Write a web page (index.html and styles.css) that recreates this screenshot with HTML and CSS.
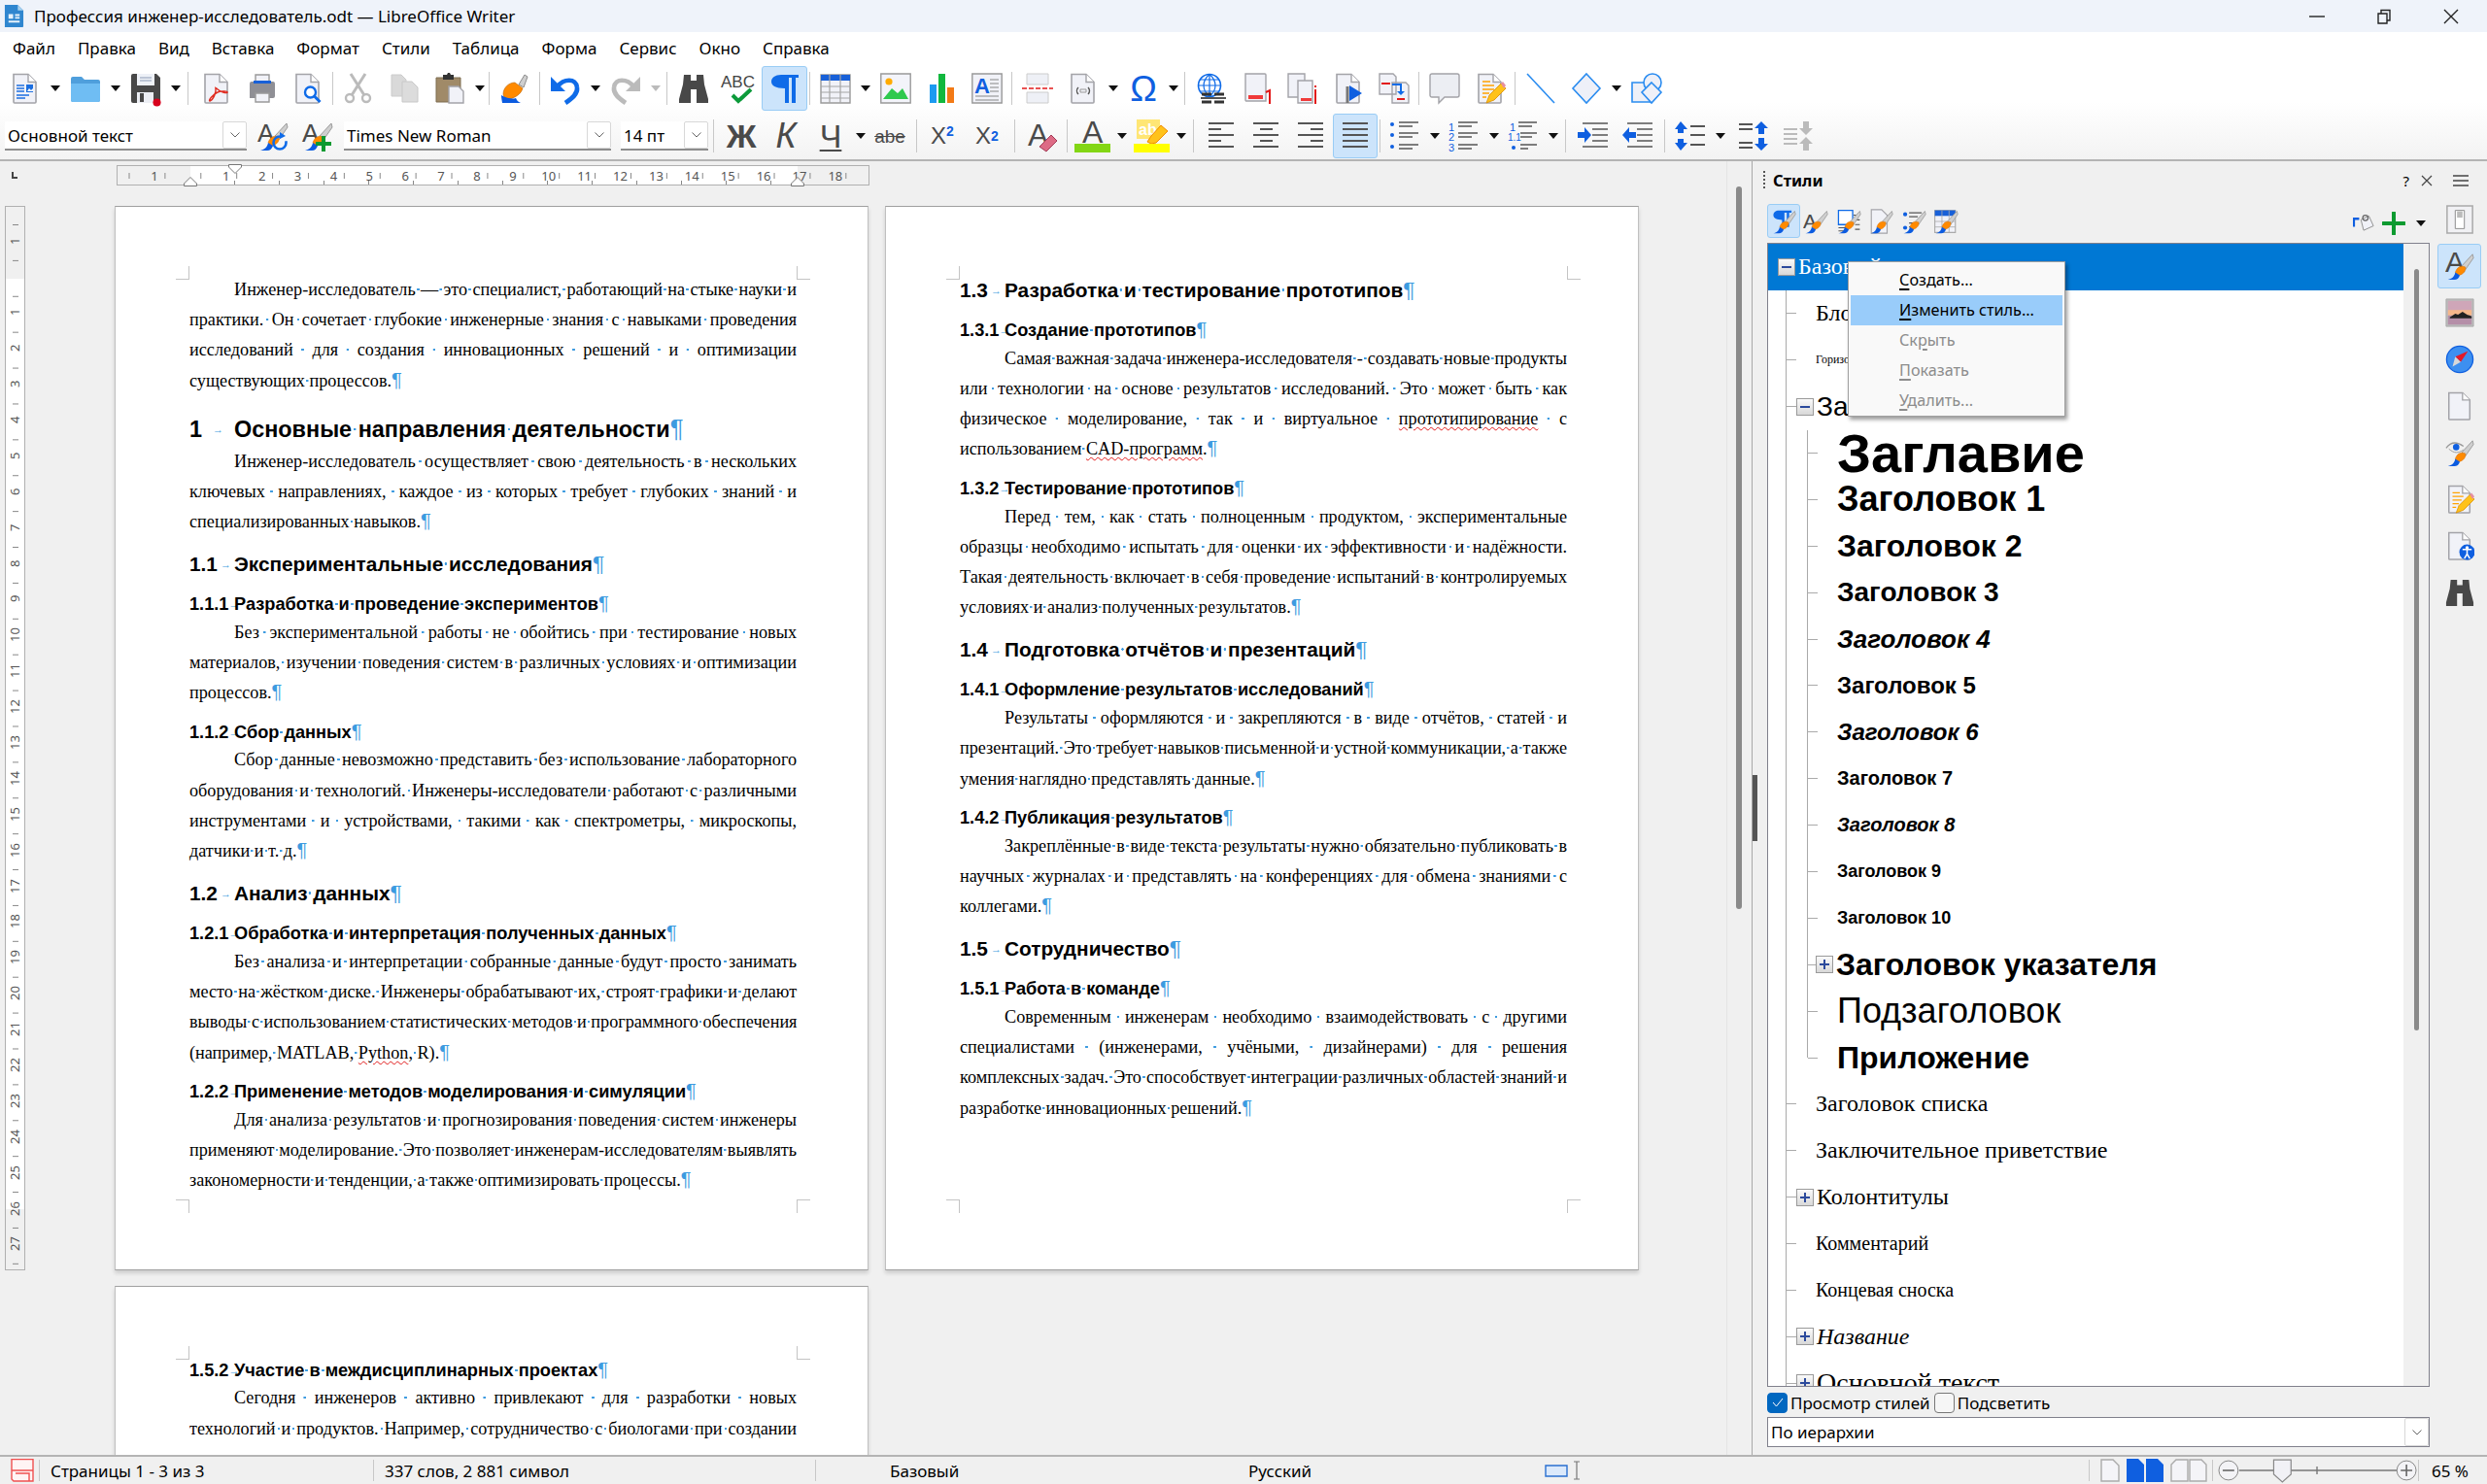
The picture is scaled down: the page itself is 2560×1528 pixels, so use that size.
FILE: index.html
```html
<!DOCTYPE html>
<html lang="ru">
<head>
  <meta charset="UTF-8" />
  <meta name="viewport" content="width=device-width, initial-scale=1.0"/>
  <title>Профессия инженер-исследователь.odt — LibreOffice Writer</title>
  <link rel="stylesheet" href="styles.css">
</head>
<body>
<svg class="defs" xmlns="http://www.w3.org/2000/svg">
  <symbol id="page" viewBox="0 0 32 32">
    <path d="M4 1.5h15l8 8V30a1 1 0 0 1-1 1H5a1 1 0 0 1-1-1z" fill="#f1f2f8" stroke="#a3a3a8" stroke-width="1.6"/>
    <path d="M19 1.5v8h8" fill="#fff" stroke="#a3a3a8" stroke-width="1.4"/>
  </symbol>
  <symbol id="brush" viewBox="0 0 32 32">
    <path d="M30 3 18 16l4 4 9-13z" fill="#cfcfcf" stroke="#9a9a9a"/>
    <path d="M11 23c2-6 6-8 11-6 1 4-2 8-7 9z" fill="#ff8a00" stroke="#d96f00" stroke-width=".6"/>
    <path d="M3 31c4-1 7-3 8-8l5 3c-1 3-3 5-6 5z" fill="#0b5be0"/>
  </symbol>
  <symbol id="binoc" viewBox="0 0 32 32">
    <path d="M6 2h7v6h6V2h7l1 10 4 15v4H19V17h-6v14H1v-4l4-15z" fill="#484848"/>
  </symbol>
</svg>

<div class="app">
  <div class="titlebar">
    <svg class="app-icon" viewBox="0 0 22 26"><path d="M1 1h14l6 6v17a1 1 0 0 1-1 1H1z" fill="#2f86cf"/><path d="M15 1v6h6z" fill="#a9d2ee"/><path d="M5 11h5v5H5zM12 11h5v2h-5zM12 14h5v2h-5zM5 18h12v2H5z" fill="#e6f2fb"/></svg>
    <span class="title">Профессия инженер-исследователь.odt — LibreOffice Writer</span>
    <div class="winctl">
      <svg viewBox="0 0 16 16"><path d="M0 8h16" stroke="#222" stroke-width="1.4"/></svg>
      <svg viewBox="0 0 16 16"><path d="M2 5h9v10H2zM5 5V1.5h9V12h-3" fill="none" stroke="#222" stroke-width="1.4"/></svg>
      <svg viewBox="0 0 16 16"><path d="M1 1l14 14M15 1 1 15" stroke="#222" stroke-width="1.4"/></svg>
    </div>
  </div>

  <div class="menubar">
    <span>Файл</span><span>Правка</span><span>Вид</span><span>Вставка</span><span>Формат</span><span>Стили</span><span>Таблица</span><span>Форма</span><span>Сервис</span><span>Окно</span><span>Справка</span>
  </div>

  <div class="toolbars">
    <div class="toolbar tb1">
      <div class="btn"><svg class="i" viewBox="0 0 32 32"><use href="#page"/><path d="M7 13h8M7 16h8M7 19h8M7 23h13M7 26h9" stroke="#1c6fe0" stroke-width="1.4"/><path d="M17 12h7v8h-7z" fill="#1c6fe0"/><path d="M18 19l2-3 2 2 2-2v3z" fill="#fff"/></svg></div>
      <div class="arrow"></div>
      <div class="btn"><svg class="i" viewBox="0 0 32 32"><path d="M1 6a2 2 0 0 1 2-2h9l3 3h14a2 2 0 0 1 2 2v19a2 2 0 0 1-2 2H3a2 2 0 0 1-2-2z" fill="#4f9fdc"/><path d="M1 11h30v17a2 2 0 0 1-2 2H3a2 2 0 0 1-2-2z" fill="#6fbdf3"/></svg></div>
      <div class="arrow"></div>
      <div class="btn"><svg class="i" viewBox="0 0 32 32"><path d="M1 3a2 2 0 0 1 2-2h24l4 4v24a2 2 0 0 1-2 2H3a2 2 0 0 1-2-2z" fill="#484848"/><path d="M7 1h18v12H7z" fill="#eef1f7"/><path d="M10 5h12M10 8h12" stroke="#8a9ab5" stroke-width="1.2"/><path d="M7 20h17v11H7z" fill="#eceef4"/><path d="M10 21h4v9h-4z" fill="#484848"/></svg><svg class="i dot" viewBox="0 0 10 10"><circle cx="5" cy="5" r="4.5" fill="#d8001c"/></svg></div>
      <div class="arrow"></div>
      <div class="sep"></div>
      <div class="btn"><svg class="i" viewBox="0 0 32 32"><use href="#page"/><path d="M15 15c1 6-3 13-6 14-2 0 3-7 8-9 5-2 10-1 10 0 0 2-8-1-10-3-1-1-3-2-2-2" fill="none" stroke="#e02b20" stroke-width="1.4"/></svg></div>
      <div class="btn"><svg class="i" viewBox="0 0 32 32"><path d="M9 2h14v8H9z" fill="#f1f2f8" stroke="#999" stroke-width="1.4"/><path d="M3 11a2 2 0 0 1 2-2h22a2 2 0 0 1 2 2v13a2 2 0 0 1-2 2H3z" fill="#8f8f95"/><path d="M7 8h18v3H7z" fill="#1860d8"/><path d="M9 21h14v9H9z" fill="#f1f2f8" stroke="#999" stroke-width="1.4"/></svg></div>
      <div class="btn"><svg class="i" viewBox="0 0 32 32"><use href="#page"/><circle cx="18.500" cy="20" r="5.500" fill="#fff" stroke="#0f6be8" stroke-width="2.400"/><path d="M22.500 24l6 6" stroke="#0f6be8" stroke-width="3"/></svg></div>
      <div class="sep tight"></div>
      <div class="btn off"><svg class="i" viewBox="0 0 32 32"><circle cx="7" cy="26" r="4" fill="none" stroke="#bbb" stroke-width="2.400"/><circle cx="24" cy="26" r="4" fill="none" stroke="#bbb" stroke-width="2.400"/><path d="M9 23 23 1M22 23 8 1" stroke="#bbb" stroke-width="3"/></svg></div>
      <div class="btn off"><svg class="i" viewBox="0 0 32 32"><path d="M3 2h10l5 5v17H3z" fill="#d9d9d9" stroke="#ccc"/><path d="M14 9h10l6 6v15H14z" fill="#dcdcdc" stroke="#c8c8c8"/></svg></div>
      <div class="btn"><svg class="i" viewBox="0 0 32 32"><path d="M2 5h25v25H2z" fill="#a08a68" stroke="#7d6c50"/><path d="M9 2h4l1-2h2l1 2h3v5H9z" fill="#333"/><path d="M15 14h10l5 5v12H15z" fill="#f1f2f8" stroke="#a3a3a8" stroke-width="1.4"/></svg></div>
      <div class="arrow short"></div>
      <div class="sep tight"></div>
      <div class="btn"><svg class="i" viewBox="0 0 32 32"><path d="M20 12 26 2l3 2-4 11z" fill="#cfcfcf" stroke="#8c8c8c"/><path d="M4 22c0-7 6-12 12-12l8 6c-2 6-7 10-18 12z" fill="#ff8a00" stroke="#b86200" stroke-width=".6"/><path d="M2 23c0 3 1 7 1 8h19c-3-1-4-3-5-5-3 1-8 1-15-3z" fill="#0b5be0"/></svg></div>
      <div class="sep tight"></div>
      <div class="btn"><svg class="i" viewBox="0 0 32 32"><path d="M8 14c6-8 19-9 20 1 1 7-6 12-12 16" fill="none" stroke="#0f6be8" stroke-width="4.600"/><path d="M1 4v15h15z" fill="#0f6be8"/></svg></div>
      <div class="arrow"></div>
      <div class="btn off"><svg class="i" viewBox="0 0 32 32"><path d="M24 14C18 6 5 5 4 15c-1 7 6 12 12 16" fill="none" stroke="#bbb" stroke-width="4.600"/><path d="M31 4v15H16z" fill="#bbb"/></svg></div>
      <div class="arrow off"></div>
      <div class="sep mid"></div>
      <div class="btn"><svg class="i" viewBox="0 0 32 32"><use href="#binoc"/></svg></div>
      <div class="btn"><svg class="i" viewBox="0 0 32 32"><text x="-3" y="15" class="abc">ABC</text><path d="M9 23l6 6L28 17" fill="none" stroke="#0c9a3a" stroke-width="4"/></svg></div>
      <div class="btn active"><svg class="i" viewBox="0 0 32 32"><path d="M12 2h18v3h-3v26h-4V5h-3v26h-4V16C6 16 2 13 2 9s4-7 10-7z" fill="#0f6be8"/></svg></div>
      <div class="sep tight"></div>
      <div class="btn"><svg class="i" viewBox="0 0 32 32"><path d="M1 2h30v29H1z" fill="#f1f2f8" stroke="#999" stroke-width="1.400"/><path d="M1 2h30v6H1z" fill="#1860d8"/><path d="M1 14h30M1 20h30M1 26h30M10 2v29M21 2v29" stroke="#a5a5a5" stroke-width="1.200"/></svg></div>
      <div class="arrow"></div>
      <div class="btn"><svg class="i" viewBox="0 0 32 32"><path d="M.8 1h30.400v30H.8z" fill="#f3f4fa" stroke="#999" stroke-width="1.400"/><circle cx="9" cy="9" r="3.600" fill="#ffab00"/><path d="M3 27l9-11 6 5 5-5 6 11z" fill="#2fc94e"/></svg></div>
      <div class="btn"><svg class="i" viewBox="0 0 32 32"><path d="M4 12h7v19H4z" fill="#1c9af0"/><path d="M13 1h7v30h-7z" fill="#12b83e"/><path d="M22 15h7v16h-7z" fill="#f37a16"/></svg></div>
      <div class="btn"><svg class="i" viewBox="0 0 32 32"><path d="M.8 1h30.400v30H.8z" fill="#f1f2f8" stroke="#999" stroke-width="1.400"/><text x="3" y="21" class="blue-a">A</text><path d="M19 7h9M19 11h9M19 15h9M19 19h9M4 24h24M4 28h24" stroke="#888" stroke-width="1.200"/></svg></div>
      <div class="sep tight"></div>
      <div class="btn"><svg class="i" viewBox="0 0 32 32"><path d="M5 1h22v11H5zM5 20h22v11H5z" fill="#eef0f6" stroke="#ccc"/><path d="M0 16h32" stroke="#e21a1a" stroke-width="1.600" stroke-dasharray="5 2"/></svg></div>
      <div class="btn"><svg class="i" viewBox="0 0 32 32"><use href="#page"/><path d="M11 15c-2 2-2 5 0 7M21 15c2 2 2 5 0 7" fill="none" stroke="#555" stroke-width="1.400"/><path d="M13 17h6v3h-6z" fill="none" stroke="#999"/></svg></div>
      <div class="arrow"></div>
      <div class="btn"><svg class="i" viewBox="0 0 32 32"><text x="16" y="29" class="omega">Ω</text></svg></div>
      <div class="arrow"></div>
      <div class="sep mid"></div>
      <div class="btn"><svg class="i" viewBox="0 0 32 32"><circle cx="14" cy="13" r="11.500" fill="#fff" stroke="#0f6be8" stroke-width="1.600"/><path d="M14 1.500v23M2.500 13h23M4 7h20M4 19h20M14 1.500c-8 7-8 16 0 23M14 1.500c8 7 8 16 0 23" fill="none" stroke="#0f6be8" stroke-width="1.200"/><path d="M6 22h10M6 30h10M19 22h10M19 30h10" stroke="#333" stroke-width="3"/><path d="M5 26h26" stroke="#555" stroke-width="2"/></svg></div>
      <div class="btn"><svg class="i" viewBox="0 0 32 32"><path d="M4 1h20a1 1 0 0 1 1 1v27H5a1 1 0 0 1-1-1z" fill="#f1f2f8" stroke="#a3a3a8" stroke-width="1.400"/><path d="M7 23h15v4H7z" fill="#f03a3a"/><path d="M25 20l4-2v14" fill="none" stroke="#e21a1a" stroke-width="2"/></svg></div>
      <div class="btn"><svg class="i" viewBox="0 0 32 32"><path d="M1 1h17v24H1z" fill="#f1f2f8" stroke="#a3a3a8" stroke-width="1.400"/><path d="M11 8h15v23H11z" fill="#f1f2f8" stroke="#a3a3a8" stroke-width="1.400"/><path d="M14 26h11v3H14z" fill="#f03a3a"/><path d="M29 17v15M29 13v2" stroke="#e21a1a" stroke-width="2"/></svg></div>
      <div class="btn"><svg class="i" viewBox="0 0 32 32"><use href="#page"/><path d="M15 14v17" stroke="#777" stroke-width="3"/><path d="M17 13l13 8-13 8z" fill="#0f5fe0"/></svg></div>
      <div class="btn"><svg class="i" viewBox="0 0 32 32"><path d="M1 1h14l3 3v18H1zM14 10h14l3 3v18H14z" fill="#f1f2f8" stroke="#a3a3a8" stroke-width="1.400"/><path d="M3 11h9M19 27h8" stroke="#e21a1a" stroke-width="2"/><path d="M14 12h9v8" fill="none" stroke="#0f6be8" stroke-width="2"/><path d="M19 19h8l-4 4z" fill="#0f6be8"/></svg></div>
      <div class="sep tight"></div>
      <div class="btn"><svg class="i" viewBox="0 0 32 32"><path d="M3 1h26a2 2 0 0 1 2 2v20a2 2 0 0 1-2 2H16l-6 6v-6H3a2 2 0 0 1-2-2V3a2 2 0 0 1 2-2z" fill="#eceef3" stroke="#a3a3a8" stroke-width="1.400"/></svg></div>
      <div class="btn"><svg class="i" viewBox="0 0 32 32"><use href="#page"/><path d="M8 9h8M8 13h12M8 17h12M8 21h7M8 25h4" stroke="#ffa200" stroke-width="1.400"/><path d="M12 31l3-8 12-12 5 5-12 12z" fill="#ffc21a" stroke="#d98c00" stroke-width=".8"/><path d="M27 11l2-2 3 4-2 3z" fill="#e58fa0"/></svg></div>
      <div class="sep tight"></div>
      <div class="btn"><svg class="i" viewBox="0 0 32 32"><path d="M2 1l28 30" stroke="#2a8cf0" stroke-width="1.600"/></svg></div>
      <div class="btn"><svg class="i" viewBox="0 0 32 32"><path d="M16 1l14 15-14 15L2 16z" fill="#eef0f8" stroke="#2a8cf0" stroke-width="1.600"/></svg></div>
      <div class="arrow"></div>
      <div class="btn"><svg class="i" viewBox="0 0 32 32"><path d="M1 10h19v20H1z" fill="#eef0f8" stroke="#2a8cf0" stroke-width="1.600"/><circle cx="22" cy="10" r="9" fill="#eef0f8" stroke="#2a8cf0" stroke-width="1.600"/><path d="M21 10l10 10-10 11-10-11z" fill="#eef0f8" stroke="#2a8cf0" stroke-width="1.600"/></svg></div>
    </div>

    <div class="toolbar tb2">
      <div class="combo style-box"><span>Основной текст</span><div class="chev"><svg viewBox="0 0 10 6"><path d="M.5.5 5 5 9.500.5" fill="none" stroke="#666"/></svg></div></div>
      <div class="btn first"><svg class="i" viewBox="0 0 32 32"><text x="0" y="22" class="dark-a">A</text><use href="#brush"/><circle cx="23" cy="23" r="6.500" fill="none" stroke="#0f6be8" stroke-width="2.600" stroke-dasharray="30 8"/><path d="M23 12l6 4-6 3z" fill="#0f6be8"/></svg></div>
      <div class="btn"><svg class="i" viewBox="0 0 32 32"><text x="0" y="22" class="dark-a">A</text><use href="#brush"/><path d="M22 16v16M14 24h16" stroke="#0d9a30" stroke-width="4"/></svg></div>
      <div class="combo font-box"><span>Times New Roman</span><div class="chev"><svg viewBox="0 0 10 6"><path d="M.5.5 5 5 9.500.5" fill="none" stroke="#666"/></svg></div></div>
      <div class="combo size-box"><span>14 пт</span><div class="chev"><svg viewBox="0 0 10 6"><path d="M.5.5 5 5 9.500.5" fill="none" stroke="#666"/></svg></div></div>
      <div class="sep"></div>
      <div class="btn glyph bold">Ж</div>
      <div class="btn glyph ital">К</div>
      <div class="btn glyph under">Ч</div>
      <div class="arrow"></div>
      <div class="btn glyph strike">abe</div>
      <div class="sep mid"></div>
      <div class="btn glyph x">X<sup>2</sup></div>
      <div class="btn glyph x">X<sub>2</sub></div>
      <div class="sep"></div>
      <div class="btn"><svg class="i" viewBox="0 0 32 32"><text x="1" y="26" class="dark-a big">A</text><path d="M13 27 25 15l6 6-11 11z" fill="#dd6b85" stroke="#a33c57"/></svg></div>
      <div class="sep tight"></div>
      <div class="btn"><svg class="i wide" viewBox="0 0 37 36"><text x="8" y="25" class="dark-a big">A</text><path d="M0 26h37v9H0z" fill="#83d614"/></svg></div>
      <div class="arrow"></div>
      <div class="btn"><svg class="i wide" viewBox="0 0 37 36"><path d="M3 1h24v20H3z" fill="#ffe675"/><text x="5" y="17" class="ab">ab</text><path d="M14 24l4-6 10-11 7 6-12 12-5 1z" fill="#ffc21a" stroke="#f08a00"/><path d="M0 26h37v9H0z" fill="#ffff00"/></svg></div>
      <div class="arrow"></div>
      <div class="sep"></div>
      <div class="btn"><svg class="i" viewBox="0 0 32 32"><path d="M3 3h26M3 9h13M3 15h26M3 21h13M3 27h26" stroke="#555" stroke-width="1.800"/></svg></div>
      <div class="btn"><svg class="i" viewBox="0 0 32 32"><path d="M3 3h26M10 9h13M3 15h26M10 21h13M3 27h26" stroke="#555" stroke-width="1.800"/></svg></div>
      <div class="btn"><svg class="i" viewBox="0 0 32 32"><path d="M3 3h26M16 9h13M3 15h26M16 21h13M3 27h26" stroke="#555" stroke-width="1.800"/></svg></div>
      <div class="btn active"><svg class="i" viewBox="0 0 32 32"><path d="M3 3h26M3 9h26M3 15h26M3 21h26M3 27h26" stroke="#555" stroke-width="1.800"/></svg></div>
      <div class="sep tight"></div>
      <div class="btn"><svg class="i" viewBox="0 0 32 32"><circle cx="3" cy="4" r="2" fill="#0f5fe0"/><circle cx="3" cy="15" r="2" fill="#0f5fe0"/><circle cx="3" cy="27" r="2" fill="#0f5fe0"/><path d="M10 2h20M10 6h14M10 13h20M10 17h14M10 25h20M10 29h14" stroke="#555" stroke-width="1.600"/></svg></div>
      <div class="arrow"></div>
      <div class="btn"><svg class="i" viewBox="0 0 32 32"><text x="0" y="11" class="num-i">1</text><text x="0" y="21" class="num-i">2</text><text x="0" y="32" class="num-i">3</text><path d="M10 2h20M10 6h14M10 13h20M10 17h14M10 25h20M10 29h14" stroke="#555" stroke-width="1.600"/></svg></div>
      <div class="arrow"></div>
      <div class="btn"><svg class="i" viewBox="0 0 32 32"><text x="2" y="11" class="num-i">1</text><text x="0" y="21" class="num-i small">1.1</text><circle cx="6" cy="28" r="2" fill="#0f5fe0"/><path d="M11 2h19M11 6h14M13 13h17M13 17h12M13 25h17M13 29h8" stroke="#555" stroke-width="1.600"/></svg></div>
      <div class="arrow"></div>
      <div class="sep"></div>
      <div class="btn"><svg class="i" viewBox="0 0 32 32"><path d="M5 3h26M15 9h16M15 15h16M15 21h16M5 27h26" stroke="#555" stroke-width="1.600"/><path d="M0 12h7V7l7 8-7 8v-5H0z" fill="#0f5fe0"/></svg></div>
      <div class="btn"><svg class="i" viewBox="0 0 32 32"><path d="M5 3h26M15 9h16M15 15h16M15 21h16M5 27h26" stroke="#555" stroke-width="1.600"/><path d="M14 12H7V7l-7 8 7 8v-5h7z" fill="#0f5fe0"/></svg></div>
      <div class="sep mid"></div>
      <div class="btn"><svg class="i" viewBox="0 0 32 32"><path d="M6 1l7 8H9v4H3V9H0zM6 31l7-8H9v-4H3v4H0z" fill="#0f5fe0"/><path d="M16 6h15M16 15h15M16 25h15" stroke="#555" stroke-width="2"/></svg></div>
      <div class="arrow"></div>
      <div class="sep blank"></div>
      <div class="btn"><svg class="i" viewBox="0 0 32 32"><path d="M1 4h14M1 9h14M1 23h14M1 28h14" stroke="#555" stroke-width="1.800"/><path d="M24 1l7 7h-4v6h-6V8h-4zM24 31l7-7h-4v-6h-6v6h-4z" fill="#0f5fe0"/></svg></div>
      <div class="btn"><svg class="i" viewBox="0 0 32 32"><path d="M1 9h14M1 14h14M1 19h14M1 24h14" stroke="#bbb" stroke-width="1.800"/><path d="M24 15l7-7h-4V1h-6v7h-4zM24 17l7 7h-4v7h-6v-7h-4z" fill="#bbb"/></svg></div>
    </div>
  </div>

  <div class="main">
    <div class="work">
      <div class="work-left">
        <div class="ruler-row">
          <span class="corner"></span>
          <div class="hruler">
            <span>1</span><span></span><span>1</span><span>2</span><span>3</span><span>4</span><span>5</span><span>6</span><span>7</span><span>8</span><span>9</span><span>10</span><span>11</span><span>12</span><span>13</span><span>14</span><span>15</span><span>16</span><span>17</span><span>18</span>
            <svg class="marker m-left" viewBox="0 0 14 10"><path d="M7 .5 13.500 7v2.500H.5V7z" fill="#fff" stroke="#777"/></svg>
            <svg class="marker m-first" viewBox="0 0 14 10"><path d="M7 9.500.5 3V.5h13V3z" fill="#fff" stroke="#777"/></svg>
            <svg class="marker m-right" viewBox="0 0 14 10"><path d="M7 .5 13.500 7v2.500H.5V7z" fill="#fff" stroke="#777"/></svg>
          </div>
        </div>
        <div class="docarea">
          <div class="vruler">
            <span>1</span><span></span><span>1</span><span>2</span><span>3</span><span>4</span><span>5</span><span>6</span><span>7</span><span>8</span><span>9</span><span>10</span><span>11</span><span>12</span><span>13</span><span>14</span><span>15</span><span>16</span><span>17</span><span>18</span><span>19</span><span>20</span><span>21</span><span>22</span><span>23</span><span>24</span><span>25</span><span>26</span><span>27</span>
          </div>
          <div class="pages">
            <div class="page">
              <i class="crop tl"></i><i class="crop tr"></i><i class="crop bl"></i><i class="crop br"></i>
              <div class="line first">Инженер-исследователь — это специалист, работающий на стыке науки и</div>
              <div class="line">практики. Он сочетает глубокие инженерные знания с навыками проведения</div>
              <div class="line">исследований для создания инновационных решений и оптимизации</div>
              <div class="line end">существующих процессов.<b class="pm">¶</b></div>
              <div class="h h1"><span class="num">1<i class="tab">→</i></span>Основные направления деятельности<b class="pm">¶</b></div>
              <div class="line first">Инженер-исследователь осуществляет свою деятельность в нескольких</div>
              <div class="line">ключевых направлениях, каждое из которых требует глубоких знаний и</div>
              <div class="line end">специализированных навыков.<b class="pm">¶</b></div>
              <div class="h h2"><span class="num">1.1<i class="tab">→</i></span>Экспериментальные исследования<b class="pm">¶</b></div>
              <div class="h h3"><span class="num">1.1.1<i class="tab">→</i></span>Разработка и проведение экспериментов<b class="pm">¶</b></div>
              <div class="line first">Без экспериментальной работы не обойтись при тестирование новых</div>
              <div class="line">материалов, изучении поведения систем в различных условиях и оптимизации</div>
              <div class="line end">процессов.<b class="pm">¶</b></div>
              <div class="h h3"><span class="num">1.1.2<i class="tab">→</i></span>Сбор данных<b class="pm">¶</b></div>
              <div class="line first">Сбор данные невозможно представить без использование лабораторного</div>
              <div class="line">оборудования и технологий. Инженеры-исследователи работают с различными</div>
              <div class="line">инструментами и устройствами, такими как спектрометры, микроскопы,</div>
              <div class="line end">датчики и т. д.<b class="pm">¶</b></div>
              <div class="h h2"><span class="num">1.2<i class="tab">→</i></span>Анализ данных<b class="pm">¶</b></div>
              <div class="h h3"><span class="num">1.2.1<i class="tab">→</i></span>Обработка и интерпретация полученных данных<b class="pm">¶</b></div>
              <div class="line first">Без анализа и интерпретации собранные данные будут просто занимать</div>
              <div class="line">место на жёстком диске. Инженеры обрабатывают их, строят графики и делают</div>
              <div class="line">выводы с использованием статистических методов и программного обеспечения</div>
              <div class="line end">(например, MATLAB, <span class="err">Python</span>, R).<b class="pm">¶</b></div>
              <div class="h h3"><span class="num">1.2.2<i class="tab">→</i></span>Применение методов моделирования и симуляции<b class="pm">¶</b></div>
              <div class="line first">Для анализа результатов и прогнозирования поведения систем инженеры</div>
              <div class="line">применяют моделирование. Это позволяет инженерам-исследователям выявлять</div>
              <div class="line end">закономерности и тенденции, а также оптимизировать процессы.<b class="pm">¶</b></div>
            </div>

            <div class="page">
              <i class="crop tl"></i><i class="crop tr"></i><i class="crop bl"></i><i class="crop br"></i>
              <div class="h h2"><span class="num">1.3<i class="tab">→</i></span>Разработка и тестирование прототипов<b class="pm">¶</b></div>
              <div class="h h3"><span class="num">1.3.1<i class="tab">→</i></span>Создание прототипов<b class="pm">¶</b></div>
              <div class="line first">Самая важная задача инженера-исследователя - создавать новые продукты</div>
              <div class="line">или технологии на основе результатов исследований. Это может быть как</div>
              <div class="line">физическое моделирование, так и виртуальное <span class="err">прототипирование</span> с</div>
              <div class="line end">использованием <span class="err">CAD-программ</span>.<b class="pm">¶</b></div>
              <div class="h h3"><span class="num">1.3.2<i class="tab">→</i></span>Тестирование прототипов<b class="pm">¶</b></div>
              <div class="line first">Перед тем, как стать полноценным продуктом, экспериментальные</div>
              <div class="line">образцы необходимо испытать для оценки их эффективности и надёжности.</div>
              <div class="line">Такая деятельность включает в себя проведение испытаний в контролируемых</div>
              <div class="line end">условиях и анализ полученных результатов.<b class="pm">¶</b></div>
              <div class="h h2"><span class="num">1.4<i class="tab">→</i></span>Подготовка отчётов и презентаций<b class="pm">¶</b></div>
              <div class="h h3"><span class="num">1.4.1<i class="tab">→</i></span>Оформление результатов исследований<b class="pm">¶</b></div>
              <div class="line first">Результаты оформляются и закрепляются в виде отчётов, статей и</div>
              <div class="line">презентаций. Это требует навыков письменной и устной коммуникации, а также</div>
              <div class="line end">умения наглядно представлять данные.<b class="pm">¶</b></div>
              <div class="h h3"><span class="num">1.4.2<i class="tab">→</i></span>Публикация результатов<b class="pm">¶</b></div>
              <div class="line first">Закреплённые в виде текста результаты нужно обязательно публиковать в</div>
              <div class="line">научных журналах и представлять на конференциях для обмена знаниями с</div>
              <div class="line end">коллегами.<b class="pm">¶</b></div>
              <div class="h h2"><span class="num">1.5<i class="tab">→</i></span>Сотрудничество<b class="pm">¶</b></div>
              <div class="h h3"><span class="num">1.5.1<i class="tab">→</i></span>Работа в команде<b class="pm">¶</b></div>
              <div class="line first">Современным инженерам необходимо взаимодействовать с другими</div>
              <div class="line">специалистами (инженерами, учёными, дизайнерами) для решения</div>
              <div class="line">комплексных задач. Это способствует интеграции различных областей знаний и</div>
              <div class="line end">разработке инновационных решений.<b class="pm">¶</b></div>
            </div>

            <div class="page">
              <i class="crop tl"></i><i class="crop tr"></i>
              <div class="h h3"><span class="num">1.5.2<i class="tab">→</i></span>Участие в междисциплинарных проектах<b class="pm">¶</b></div>
              <div class="line first">Сегодня инженеров активно привлекают для разработки новых</div>
              <div class="line">технологий и продуктов. Например, сотрудничество с биологами при создании</div>
            </div>
          </div>
        </div>
      </div>
      <div class="vscroll"><div class="thumb"></div></div>
    </div>

    <div class="splitter"><div class="handle"></div></div>

    <div class="sidepanel">
      <div class="deck">
        <div class="deck-title">
          <i class="grip"></i><span class="deck-name">Стили</span>
          <span class="help">?</span>
          <svg class="deck-x" viewBox="0 0 12 12"><path d="M1 1l10 10M11 1 1 11" stroke="#444" stroke-width="1.200"/></svg>
          <svg class="deck-menu" viewBox="0 0 16 12"><path d="M0 1h16M0 6h16M0 11h16" stroke="#444" stroke-width="1.400"/></svg>
        </div>
        <div class="deck-tools">
          <div class="tool active"><svg viewBox="0 0 32 32"><path d="M10 2h16v3h-3v18h-3V5h-3v18h-3v-9C8 14 3 12 3 8s3-6 7-6z" fill="#0f6be8"/><use href="#brush"/></svg></div>
          <div class="tool"><svg viewBox="0 0 32 32"><text x="0" y="24" class="dark-a">A</text><use href="#brush"/></svg></div>
          <div class="tool"><svg viewBox="0 0 32 32"><path d="M3 2h18v18H3z" fill="#fff" stroke="#0f6be8" stroke-width="1.600"/><path d="M22 8h8M22 14h8M3 24h9M3 28h8M24 20h6M24 26h6" stroke="#555" stroke-width="1.400"/><use href="#brush"/></svg></div>
          <div class="tool"><svg viewBox="0 0 32 32"><path d="M4 1h13l7 7v23H4z" fill="#f1f2f8" stroke="#a3a3a8" stroke-width="1.400"/><use href="#brush"/></svg></div>
          <div class="tool"><svg viewBox="0 0 32 32"><circle cx="5" cy="7" r="2.600" fill="#0f5fe0"/><circle cx="5" cy="24" r="2.600" fill="#0f5fe0"/><path d="M10 5h16M10 10h11M10 18h6M10 23h4" stroke="#555" stroke-width="1.400"/><use href="#brush"/></svg></div>
          <div class="tool"><svg viewBox="0 0 32 32"><path d="M2 2h26v28H2z" fill="#f1f2f8" stroke="#aaa" stroke-width="1.400"/><path d="M2 2h26v7H2z" fill="#1860d8"/><path d="M2 16h26M2 23h26M11 2v28M20 2v28" stroke="#aaa"/><use href="#brush"/></svg></div>
          <span class="tools-spacer"></span>
          <svg class="t-new" viewBox="0 0 24 24"><path d="M1 18V9h6" fill="none" stroke="#0f5fe0" stroke-width="2.600"/><path d="M9 10l9-4 5 11-11 5z" fill="#f1f2f8" stroke="#8a8a8a"/><circle cx="14" cy="8" r="3" fill="none" stroke="#666" stroke-width="1.400"/></svg>
          <svg class="t-plus" viewBox="0 0 24 24"><path d="M12 1v22M1 12h22" stroke="#0d9a30" stroke-width="4" stroke-linecap="round"/></svg>
          <div class="arrow"></div>
        </div>
        <div class="listbox">
          <div class="tree">
            <div class="row selected"><i class="exp minus"></i><span class="s-base">Базовый</span></div>
            <div class="kids">
              <div class="row leaf"><span class="s-serif">Блочная цитата</span></div>
              <div class="row leaf"><span class="s-tiny">Горизонтальная линия</span></div>
              <div class="row"><i class="exp minus"></i><span class="s-head">Заголовок</span></div>
              <div class="kids2">
                <div class="row leaf"><span class="sans s56">Заглавие</span></div>
                <div class="row leaf"><span class="sans s36">Заголовок 1</span></div>
                <div class="row leaf"><span class="sans s32">Заголовок 2</span></div>
                <div class="row leaf"><span class="sans s28">Заголовок 3</span></div>
                <div class="row leaf"><span class="sans s26 it">Заголовок 4</span></div>
                <div class="row leaf"><span class="sans s24">Заголовок 5</span></div>
                <div class="row leaf"><span class="sans s24 it">Заголовок 6</span></div>
                <div class="row leaf"><span class="sans s20">Заголовок 7</span></div>
                <div class="row leaf"><span class="sans s20 it">Заголовок 8</span></div>
                <div class="row leaf"><span class="sans s18">Заголовок 9</span></div>
                <div class="row leaf"><span class="sans s18">Заголовок 10</span></div>
                <div class="row"><i class="exp plus"></i><span class="sans s32">Заголовок указателя</span></div>
                <div class="row leaf"><span class="sans s36 reg">Подзаголовок</span></div>
                <div class="row leaf"><span class="sans s32">Приложение</span></div>
              </div>
              <div class="row leaf"><span class="s-serif">Заголовок списка</span></div>
              <div class="row leaf"><span class="s-serif">Заключительное приветствие</span></div>
              <div class="row"><i class="exp plus"></i><span class="s-serif">Колонтитулы</span></div>
              <div class="row leaf"><span class="s-small">Комментарий</span></div>
              <div class="row leaf"><span class="s-small">Концевая сноска</span></div>
              <div class="row"><i class="exp plus"></i><span class="s-serif it">Название</span></div>
              <div class="row"><i class="exp plus"></i><span class="s-body">Основной текст</span></div>
            </div>
          </div>
          <div class="list-scroll"><div class="thumb"></div></div>
        </div>
        <div class="checks">
          <i class="check on"><svg viewBox="0 0 12 10"><path d="M1 5l3.500 4L11 1" fill="none" stroke="#fff" stroke-width="1"/></svg></i><span>Просмотр стилей</span>
          <i class="check"></i><span>Подсветить</span>
        </div>
        <div class="combo filter"><span>По иерархии</span><div class="chev"><svg viewBox="0 0 10 6"><path d="M.5.5 5 5 9.500.5" fill="none" stroke="#666"/></svg></div></div>
      </div>

      <div class="tabbar">
        <svg class="tab-i" viewBox="0 0 32 32"><path d="M2 1h28v30H2z" fill="#f1f1f4" stroke="#a9a9a9" stroke-width="1.600"/><path d="M11 6h10v20H11z" fill="#fff" stroke="#888"/><path d="M13 7h6v7h-6z" fill="#bbb"/></svg>
        <div class="side-tab"><svg class="tab-i" viewBox="0 0 32 32"><text x="0" y="22" class="dark-a big">A</text><use href="#brush"/></svg></div>
        <svg class="tab-i" viewBox="0 0 32 32"><path d="M1 1h30v30H1z" fill="#bbb" stroke="#aaa"/><path d="M3 3h26v14H3z" fill="#cfa6b8"/><path d="M3 13h26v6H3z" fill="#f5b78a"/><path d="M3 19h26v10H3z" fill="#b58fa8"/><path d="M5 21l6-4 3 1 5-3 5 3 5 2v2H5z" fill="#222"/></svg>
        <svg class="tab-i" viewBox="0 0 32 32"><circle cx="16" cy="16" r="14.500" fill="#3d8ff0" stroke="#0f5fe0" stroke-width="1.400"/><path d="M25 7 11 13l6 6z" fill="#e21a2a"/><path d="M8 24l3-11 6 6z" fill="#d8d8d8"/></svg>
        <svg class="tab-i" viewBox="0 0 32 32"><use href="#page"/></svg>
        <svg class="tab-i" viewBox="0 0 32 32"><path d="M1 11c5-7 12-7 19-2" fill="none" stroke="#999" stroke-width="1.400"/><path d="M4 12c6 5 10 5 16 1" fill="none" stroke="#999" stroke-width="1"/><circle cx="12" cy="10" r="3.500" fill="#0f5fe0"/><use href="#brush"/></svg>
        <svg class="tab-i" viewBox="0 0 32 32"><use href="#page"/><path d="M8 9h8M8 13h12M8 17h10M8 21h7M8 25h4" stroke="#ffa200" stroke-width="1.400"/><path d="M12 31l3-8 12-12 5 5-12 12z" fill="#ffc21a" stroke="#d98c00" stroke-width=".8"/><path d="M27 11l2-2 3 4-2 3z" fill="#e58fa0"/></svg>
        <svg class="tab-i" viewBox="0 0 32 32"><use href="#page"/><circle cx="24" cy="23" r="8.500" fill="#0f5fe0"/><circle cx="24" cy="18" r="1.800" fill="#fff"/><path d="M19 20h10M24 20v5l-3 5M24 25l3 5" stroke="#fff" stroke-width="1.600" fill="none"/></svg>
        <svg class="tab-i" viewBox="0 0 32 32"><use href="#binoc"/></svg>
      </div>
    </div>
  </div>

  <div class="statusbar">
    <div class="sb-cell sb-icon"><svg viewBox="0 0 24 24"><path d="M1 .5h22V23H3l-2-2z" fill="#fff4f4" stroke="#f05050" stroke-width="1.400"/><path d="M1 12h22M5 15h14v8" fill="none" stroke="#f05050" stroke-width="1.400"/></svg></div>
    <div class="sb-cell sb-pages">Страницы 1 - 3 из 3</div>
    <div class="sb-cell sb-words">337 слов, 2 881 символ</div>
    <div class="sb-cell sb-style">Базовый</div>
    <div class="sb-cell sb-lang">Русский</div>
    <div class="sb-cell sb-mode"><svg viewBox="0 0 40 22"><path d="M1 6h22v11H1z" fill="#dbe9fb" stroke="#2a6fd0" stroke-width="1.400"/><path d="M33 2v18M30 2h6M30 20h6" stroke="#777" stroke-width="1.200"/></svg></div>
    <div class="sb-cell sb-view">
      <svg class="v-one" viewBox="0 0 20 24"><path d="M1 1h12l6 6v16H1z" fill="#f4f4f8" stroke="#aaa" stroke-width="1.400"/></svg>
      <svg class="v-two" viewBox="0 0 38 24"><path d="M0 0h12l6 6v18H0zM20 0h12l6 6v18H20z" fill="#0f5fe0"/></svg>
      <svg class="v-book" viewBox="0 0 38 24"><path d="M6 1h12v22H1V6zM20 1h12l5 5v17H20z" fill="#f4f4f8" stroke="#aaa" stroke-width="1.400"/></svg>
    </div>
    <div class="sb-cell sb-zoom">
      <svg viewBox="0 0 208 26"><path d="M22 13h164M103 9v8" stroke="#777" stroke-width="1.400"/><circle cx="11" cy="13" r="10" fill="#f3f3f6" stroke="#888"/><path d="M5 13h12" stroke="#666" stroke-width="1.600"/><circle cx="196" cy="13" r="10" fill="#f3f3f6" stroke="#888"/><path d="M190 13h12M196 7v12" stroke="#666" stroke-width="1.600"/><path d="M58 2h18v15l-9 8-9-8z" fill="#f1f1f6" stroke="#888" stroke-width="1.200"/></svg>
    </div>
    <div class="sb-cell sb-pct">65 %</div>
  </div>

  <div class="ctx">
    <div class="ctx-item"><u>С</u>оздать...</div>
    <div class="ctx-item on"><u>И</u>зменить стиль...</div>
    <div class="ctx-item off">Ск<u>р</u>ыть</div>
    <div class="ctx-item off"><u>П</u>оказать</div>
    <div class="ctx-item off"><u>У</u>далить...</div>
  </div>
</div>
<script src="script.js"></script>
</body>
</html>
```

FILE: styles.css
```css
* {
  box-sizing: border-box;
}

body {
  margin: 0;
  background-color: #f0f0f0;
  color: #000;
  font-family: "Noto Sans", sans-serif;
  font-size: 17px;
}

.defs {
  display: none;
}

.app {
  position: relative;
  width: 2560px;
  height: 1528px;
  overflow: hidden;
  display: flex;
  flex-direction: column;
}

/* title + menu */
.titlebar {
  height: 33px;
  flex: none;
  background-color: #eff3fa;
  display: flex;
  align-items: center;
  padding-left: 4px;
}

.app-icon {
  width: 21px;
  height: 25px;
  margin-right: 10px;
}

.winctl {
  margin-left: auto;
  display: flex;
  align-items: center;
  gap: 53px;
  padding-right: 29px;
}

.winctl svg {
  width: 16px;
  height: 16px;
}

.menubar {
  height: 33px;
  flex: none;
  background-color: #fff;
  display: flex;
  align-items: center;
  gap: 23px;
  padding-left: 13px;
}

/* toolbars */
.toolbars {
  flex: none;
  height: 100px;
  background: linear-gradient(#fff 40%, #f3f3f3);
  border-bottom: 2px solid #b4b4b4;
}

.toolbar {
  display: flex;
  align-items: center;
}

.tb1 {
  height: 50px;
  padding-left: 2px;
}

.tb2 {
  height: 48px;
  padding-left: 5px;
}

.btn {
  position: relative;
  flex: none;
  width: 47px;
  height: 46px;
  display: flex;
  align-items: center;
  justify-content: center;
  border: 1px solid transparent;
  border-radius: 3px;
}

.tb2 .btn {
  width: 46px;
}

.btn.active {
  background-color: #cce4fb;
  border-color: #99ccf5;
}

.i {
  width: 32px;
  height: 32px;
  overflow: visible;
}

.i.wide {
  width: 37px;
  height: 36px;
}

.i.dot {
  position: absolute;
  width: 9px;
  height: 9px;
  right: 6px;
  bottom: 3px;
}

.arrow {
  flex: none;
  width: 15px;
  display: flex;
  justify-content: center;
}

.arrow::before {
  content: "";
  border-left: 5px solid transparent;
  border-right: 5px solid transparent;
  border-top: 6px solid #111;
}

.arrow.off::before {
  border-top-color: #bbb;
}

.sep {
  flex: none;
  width: 11px;
  height: 34px;
  background: linear-gradient(#c8c8c8, #c8c8c8) center / 1px 100% no-repeat;
}

.sep.mid {
  width: 8px;
}

.sep.tight {
  width: 5px;
}

.sep.blank {
  width: 4px;
  background: none;
}

.combo {
  flex: none;
  height: 30px;
  background-color: #fff;
  border-bottom: 2px solid #8c8c8c;
  display: flex;
  align-items: center;
  padding-left: 3px;
}

.combo span {
  flex: 1;
}

.chev {
  width: 25px;
  height: 100%;
  border: 1px solid #d8d8d8;
  border-radius: 2px;
  display: flex;
  align-items: center;
  justify-content: center;
}

.chev svg {
  width: 10px;
  height: 6px;
}

.style-box {
  width: 249px;
}

.btn.first {
  margin-left: 4px;
}

.font-box {
  width: 275px;
  margin-left: 4px;
}

.size-box {
  width: 90px;
  margin-left: 10px;
}

.glyph {
  font-family: "Liberation Sans", sans-serif;
  color: #4a4a4a;
  line-height: 1;
}

.glyph.bold {
  font-size: 34px;
  font-weight: bold;
}

.glyph.ital {
  font-size: 36px;
  font-style: italic;
}

.glyph.under {
  font-size: 34px;
  text-decoration: underline;
  text-decoration-thickness: 2px;
  text-underline-offset: 2px;
}

.glyph.strike {
  font-size: 19px;
  text-decoration: line-through;
}

.glyph.x {
  font-size: 24px;
}

.glyph sup,
.glyph sub {
  color: #0f5fe0;
  font-size: 14px;
  font-weight: bold;
}

.glyph sup {
  margin-bottom: 10px;
}

svg text {
  font-family: "Liberation Sans", sans-serif;
}

.abc {
  font-size: 17px;
  fill: #444;
}

.blue-a {
  font-size: 22px;
  font-weight: bold;
  fill: #0f5fe0;
}

.omega {
  font-size: 37px;
  fill: #0f5fe0;
  text-anchor: middle;
}

.dark-a {
  font-size: 26px;
  fill: #4a4a4a;
}

.dark-a.big {
  font-size: 32px;
}

.ab {
  font-size: 16px;
  fill: #fff;
  font-weight: bold;
}

.num-i {
  font-size: 11px;
  fill: #0f5fe0;
}

.num-i.small {
  font-size: 10px;
}

/* main area */
.main {
  flex: 1;
  min-height: 0;
  display: flex;
  overflow: hidden;
}

.work {
  flex: none;
  width: 1804px;
  display: flex;
  overflow: hidden;
  border-right: 1px solid #a8a8a8;
}

.work-left {
  flex: 1;
  min-width: 0;
  display: flex;
  flex-direction: column;
}

.vscroll {
  flex: none;
  width: 26px;
  border-left: 1px solid #e4e4e4;
  padding: 26px 0 0 9px;
}

.vscroll .thumb {
  width: 6px;
  height: 744px;
  background-color: #8a8a8a;
  border-radius: 3px;
}

.ruler-row {
  flex: none;
  height: 46px;
  padding: 4px 0 0 0;
  display: flex;
}

.corner {
  width: 6px;
  height: 7px;
  margin: 7px 0 0 12px;
  border-left: 2px solid #444;
  border-bottom: 2px solid #444;
}

.hruler {
  position: relative;
  width: 775px;
  height: 21px;
  margin-left: 102px;
  padding-left: 19.500px;
  display: flex;
  align-items: center;
  border: 1px solid #b0b0b0;
  color: #555;
  font-size: 13px;
  background:
    linear-gradient(90deg, #888 1px, transparent 1px) 11.500px 50% / 36.900px 6px repeat-x,
    linear-gradient(#f0f0f0, #f0f0f0) left / 75px 100% no-repeat,
    linear-gradient(#f0f0f0, #f0f0f0) right / 73px 100% no-repeat,
    linear-gradient(90deg, #888 1px, transparent 1px) 120px 100% / 46px 4px repeat-x,
    #fff;
}

.hruler span {
  flex: none;
  width: 36.900px;
  text-align: center;
}

.marker {
  position: absolute;
  width: 14px;
  height: 10px;
}

.m-left {
  left: 68px;
  bottom: -2px;
}

.m-first {
  left: 114px;
  top: -2px;
}

.m-right {
  left: 693px;
  bottom: -2px;
}

.docarea {
  flex: 1;
  min-height: 0;
  display: flex;
}

.vruler {
  flex: none;
  width: 21px;
  height: 1096px;
  margin-left: 5px;
  padding-top: 16.500px;
  border: 1px solid #b0b0b0;
  color: #555;
  font-size: 13px;
  background:
    linear-gradient(#888 1px, transparent 1px) 50% 18px / 6px 36.900px repeat-y,
    linear-gradient(#f0f0f0, #f0f0f0) top / 100% 74px no-repeat,
    linear-gradient(#f0f0f0, #f0f0f0) bottom / 100% 62px no-repeat,
    #fff;
}

.vruler span {
  display: flex;
  height: 36.900px;
  align-items: center;
  justify-content: center;
  writing-mode: vertical-rl;
  transform: rotate(180deg);
}

.pages {
  flex: 1;
  display: grid;
  grid-template-columns: 776px 776px;
  column-gap: 17px;
  row-gap: 16px;
  align-content: start;
  margin-left: 92px;
}

.page {
  position: relative;
  height: 1096px;
  padding: 70px 73px 0 76px;
  background-color: #fff;
  border-top: 1px solid #a0a0a0;
  border-left: 1px solid #c0c0c0;
  border-right: 1px solid #c0c0c0;
  border-bottom: 1px solid #a0a0a0;
  box-shadow: 0 3px 4px rgba(0, 0, 0, 0.15);
  font-family: "Liberation Serif", serif;
  font-size: 18.200px;
}

.crop {
  position: absolute;
  width: 14px;
  height: 14px;
}

.crop.tl {
  left: 62px;
  top: 61px;
  border-right: 1px solid #c4c4c4;
  border-bottom: 1px solid #c4c4c4;
}

.crop.tr {
  right: 59px;
  top: 61px;
  border-left: 1px solid #c4c4c4;
  border-bottom: 1px solid #c4c4c4;
}

.crop.bl {
  left: 62px;
  bottom: 58px;
  border-right: 1px solid #c4c4c4;
  border-top: 1px solid #c4c4c4;
}

.crop.br {
  right: 59px;
  bottom: 58px;
  border-left: 1px solid #c4c4c4;
  border-top: 1px solid #c4c4c4;
}

.line {
  height: 31.200px;
  line-height: 31.200px;
  white-space: nowrap;
  text-align: justify;
  text-align-last: justify;
}

.line.first {
  padding-left: 46px;
}

.line.end {
  text-align: left;
  text-align-last: left;
}

.sp {
  background: radial-gradient(circle, #3d9be0 1.100px, transparent 1.500px) center 62% / 100% 100% no-repeat;
}

.pm {
  font-family: "Liberation Sans", sans-serif;
  font-weight: normal;
  font-size: 1.100em;
  line-height: 0;
  color: #3d9be0;
}

.err {
  text-decoration: underline wavy #e01818;
  text-decoration-thickness: 1px;
  text-underline-offset: 2px;
}

.h {
  font-family: "Liberation Sans", sans-serif;
  font-weight: bold;
  white-space: nowrap;
}

.h1 {
  height: 28px;
  font-size: 23.400px;
  line-height: 28px;
  margin: 20px 0 3.800px;
}

.h2 {
  height: 24px;
  font-size: 20.800px;
  line-height: 24px;
  margin: 16px 0 0;
}

.h3 {
  height: 20px;
  font-size: 18.200px;
  line-height: 20px;
  margin: 14px 0 3.900px;
}

.h2 + .h3 {
  margin-top: 19px;
}

.page > .h:first-of-type {
  margin-top: 4px;
}

.page > .h3:first-of-type {
  margin-top: 5.500px;
}

.num {
  display: inline-flex;
  width: 46px;
}

.tab {
  flex: 1;
  text-align: center;
  color: #3d9be0;
  font-size: 11px;
  font-style: normal;
  font-weight: normal;
}

/* styles sidebar */
.splitter {
  flex: none;
  width: 5px;
  display: flex;
  align-items: center;
}

.handle {
  width: 5px;
  height: 68px;
  background-color: #555;
}

.sidepanel {
  flex: 1;
  min-width: 0;
  display: flex;
}

.deck {
  width: 692px;
  flex: none;
  padding: 0 0 0 10px;
}

.deck-title {
  height: 44px;
  margin-right: -40px;
  padding-bottom: 5px;
  display: flex;
  align-items: center;
}

.grip {
  width: 2px;
  height: 20px;
  margin: 0 8px 0 -4px;
  background: repeating-linear-gradient(#555 0 2px, transparent 2px 4px);
}

.deck-name {
  font-weight: bold;
  font-size: 16.500px;
}

.help {
  margin-left: auto;
  font-size: 15px;
}

.deck-x {
  width: 12px;
  height: 12px;
  margin-left: 12px;
}

.deck-menu {
  width: 16px;
  height: 12px;
  margin-left: 21px;
}

.deck-tools {
  height: 40px;
  display: flex;
  align-items: flex-start;
}

.tool {
  width: 33.500px;
  height: 35px;
  display: flex;
  align-items: center;
  justify-content: center;
  border: 1px solid transparent;
  border-radius: 3px;
}

.tool.active {
  background-color: #cce4fb;
  border-color: #99ccf5;
}

.tool svg {
  width: 26px;
  height: 26px;
}

.tools-spacer {
  flex: 1;
}

.t-new {
  width: 22px;
  height: 24px;
  margin: 6px 8px 0 0;
}

.t-plus {
  width: 24px;
  height: 24px;
  margin: 8px 8px 0 0;
}

.deck-tools .arrow {
  margin-top: 17px;
  margin-right: 2px;
}

.listbox {
  height: 1178px;
  display: flex;
  border: 1px solid #80808c;
  background-color: #fff;
  overflow: hidden;
}

.tree {
  flex: 1;
  min-width: 0;
  font-family: "Liberation Serif", serif;
  font-size: 24px;
}

.list-scroll {
  flex: none;
  width: 26px;
  background-color: #f0f0f0;
  padding: 26px 0 0 11px;
}

.list-scroll .thumb {
  width: 5px;
  height: 784px;
  background-color: #8a8a8a;
  border-radius: 3px;
}

.row {
  height: 47.900px;
  display: flex;
  align-items: center;
  padding-left: 10px;
  white-space: nowrap;
}

.selected {
  background-color: #0078d4;
  color: #fff;
}

.kids {
  margin-left: 18px;
  padding-left: 1px;
  background: linear-gradient(#aaa, #aaa) left top / 1px 100% no-repeat;
}

.kids .row {
  padding-left: 10px;
  background: linear-gradient(#aaa, #aaa) left center / 10px 1px no-repeat;
}

.kids .row.leaf {
  padding-left: 30px;
}

.kids2 {
  margin-left: 21px;
  padding-left: 1px;
  background: linear-gradient(#aaa, #aaa) left top / 1px calc(100% - 24px) no-repeat;
}

.kids2 .row {
  padding-left: 8px;
}

.kids2 .row.leaf {
  padding-left: 30px;
}

.exp {
  flex: none;
  width: 18px;
  height: 18px;
  margin-right: 3px;
  border: 1px solid #9a9a9a;
  background:
    linear-gradient(#2c4a9c, #2c4a9c) center / 10px 2px no-repeat,
    linear-gradient(#fafafa, #d8d8d8);
}

.exp.plus {
  background:
    linear-gradient(#2c4a9c, #2c4a9c) center / 10px 2px no-repeat,
    linear-gradient(#2c4a9c, #2c4a9c) center / 2px 10px no-repeat,
    linear-gradient(#fafafa, #d8d8d8);
}

.s-tiny {
  font-size: 12px;
}

.s-small {
  font-size: 20px;
}

.s-head {
  font-family: "Liberation Sans", sans-serif;
  font-size: 28px;
}

.s-body {
  font-size: 28px;
}

.it {
  font-style: italic;
}

.sans {
  font-family: "Liberation Sans", sans-serif;
  font-weight: bold;
}

.sans.reg {
  font-weight: normal;
}

.s56 { font-size: 56px; }
.s36 { font-size: 36px; }
.s32 { font-size: 32px; }
.s28 { font-size: 28px; }
.s26 { font-size: 26px; }
.s24 { font-size: 24px; }
.s20 { font-size: 20px; }
.s18 { font-size: 18px; }

.checks {
  height: 31px;
  padding-top: 1px;
  display: flex;
  align-items: center;
}

.check {
  flex: none;
  width: 21px;
  height: 21px;
  margin-right: 3px;
  border: 1px solid #777;
  border-radius: 4px;
  background-color: #f6f6f6;
  display: flex;
  align-items: center;
  justify-content: center;
}

.check + span + .check {
  margin-left: 4px;
}

.check.on {
  background-color: #0067c0;
  border-color: #0067c0;
}

.check svg {
  width: 12px;
  height: 10px;
}

.combo.filter {
  width: 100%;
  border: 1px solid #80808c;
  height: 31px;
}

.tabbar {
  flex: 1;
  min-width: 0;
  display: flex;
  flex-direction: column;
  align-items: center;
  gap: 18px;
  padding-top: 45px;
  padding-left: 2px;
}

.tab-i {
  flex: none;
  width: 30px;
  height: 30px;
}

.side-tab {
  flex: none;
  width: 45px;
  height: 46px;
  margin: -8px 0;
  background-color: #cce4fb;
  border: 1px solid #99ccf5;
  border-radius: 3px;
  display: flex;
  align-items: center;
  justify-content: center;
}

/* status bar */
.statusbar {
  flex: none;
  height: 30px;
  display: flex;
  align-items: center;
  border-top: 2px solid #b4b4b4;
}

.sb-cell {
  height: 22px;
  flex: none;
  display: flex;
  align-items: center;
  gap: 7px;
  border-right: 1px solid #c8c8c8;
}

.sb-icon {
  width: 41px;
  padding-left: 10px;
}

.sb-icon svg {
  width: 26px;
  height: 24px;
}

.sb-pages {
  width: 344px;
  padding-left: 11px;
}

.sb-words {
  width: 455px;
  padding-left: 11px;
}

.sb-style {
  width: 415px;
  padding-left: 76px;
  border-right: 0;
}

.sb-lang {
  width: 315px;
  padding-left: 30px;
  border-right: 0;
}

.sb-mode {
  width: 581px;
  padding-left: 20px;
}

.sb-mode svg {
  width: 40px;
  height: 22px;
}

.sb-view {
  width: 127px;
  padding-left: 11px;
}

.v-one {
  width: 20px;
  height: 24px;
}

.v-two,
.v-book {
  width: 38px;
  height: 24px;
}

.sb-zoom {
  width: 212px;
  padding-left: 5px;
}

.sb-zoom svg {
  width: 208px;
  height: 26px;
}

.sb-pct {
  padding-left: 13px;
  border-right: 0;
}

/* context menu */
.ctx {
  position: absolute;
  left: 1902px;
  top: 269px;
  width: 224px;
  height: 160px;
  padding: 3px 2px;
  background-color: #f9f9f9;
  border: 1px solid #a0a0a0;
  box-shadow: 2px 3px 4px rgba(0, 0, 0, 0.4);
  font-size: 16.200px;
}

.ctx-item {
  height: 31px;
  line-height: 31px;
  padding-left: 50px;
}

.ctx-item.on {
  background-color: #99ccfa;
}

.ctx-item.off {
  color: #8c8c8c;
}

.ctx-item u {
  text-decoration-thickness: 2px;
  text-underline-offset: 3px;
}
```

FILE: script.js
```js
// show spaces as formatting dots, like writer does with marks on
document.querySelectorAll(".line, .h").forEach(function (el) {
  const walker = document.createTreeWalker(el, NodeFilter.SHOW_TEXT);
  const nodes = [];
  while (walker.nextNode()) nodes.push(walker.currentNode);

  nodes.forEach(function (node) {
    if (!node.nodeValue.includes(" ")) return;
    const parts = node.nodeValue.split(" ");
    const frag = document.createDocumentFragment();
    parts.forEach(function (part, i) {
      if (i > 0) {
        const sp = document.createElement("span");
        sp.className = "sp";
        sp.textContent = " ";
        frag.appendChild(sp);
      }
      frag.appendChild(document.createTextNode(part));
    });
    node.parentNode.replaceChild(frag, node);
  });
});
```
